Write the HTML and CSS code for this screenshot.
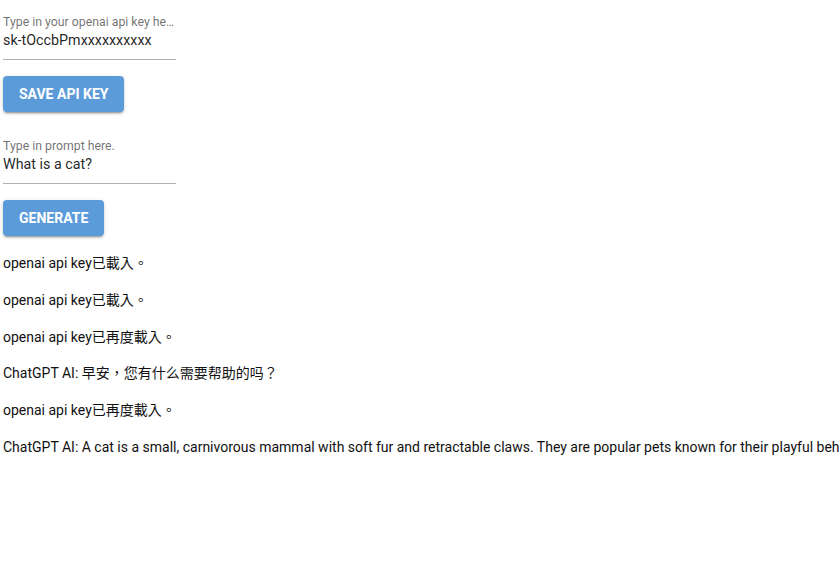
FILE: index.html
```html
<!DOCTYPE html>
<html lang="zh-Hant">
<head>
<meta charset="utf-8">
<title>ChatGPT</title>
<link rel="stylesheet" href="styles.css">
</head>
<body>
<div class="app">
  <div class="field">
    <label class="field-label">Type in your openai api key here</label>
    <div class="field-input">sk-tOccbPmxxxxxxxxxx</div>
  </div>
  <button class="btn">Save API Key</button>
  <div class="field field-next">
    <label class="field-label">Type in prompt here.</label>
    <div class="field-input">What is a cat?</div>
  </div>
  <button class="btn">Generate</button>
  <div class="log">
    <p class="msg">openai api key已載入。</p>
    <p class="msg">openai api key已載入。</p>
    <p class="msg">openai api key已再度載入。</p>
    <p class="msg">ChatGPT AI: 早安，您有什么需要帮助的吗？</p>
    <p class="msg">openai api key已再度載入。</p>
    <p class="msg">ChatGPT AI: A cat is a small, carnivorous mammal with soft fur and retractable claws. They are popular pets known for their playful behavior and independent nature.</p>
  </div>
</div>
</body>
</html>
```

FILE: styles.css
```css
html, body {
  margin: 0;
  padding: 0;
  background: #ffffff;
  overflow: hidden;
}

body {
  font-family: Roboto, "Noto Sans CJK TC", sans-serif;
  color: rgba(0, 0, 0, 0.87);
}

.app {
  display: flex;
  flex-direction: column;
  align-items: flex-start;
  padding: 12px 0 0 3px;
}

.field {
  width: 173px;
  display: flex;
  flex-direction: column;
  border-bottom: 1px solid rgba(0, 0, 0, 0.3);
}

.field-next {
  margin-top: 24px;
}

.field-label {
  font-size: 12.3px;
  line-height: 14px;
  padding-top: 3px;
  color: rgba(0, 0, 0, 0.58);
  white-space: nowrap;
  overflow: hidden;
  text-overflow: ellipsis;
}

.field-input {
  font-size: 14.3px;
  line-height: 19px;
  padding: 2px 0 9px;
  color: rgba(0, 0, 0, 0.87);
  white-space: nowrap;
}

.btn {
  margin-top: 16px;
  height: 36px;
  padding: 0 16px;
  border: none;
  border-radius: 4px;
  background: #5c9bd9;
  color: #ffffff;
  font-family: Roboto, sans-serif;
  font-size: 14px;
  font-weight: 700;
  letter-spacing: 0;
  text-transform: uppercase;
  box-shadow: 0 3px 1px -2px rgba(0,0,0,0.2), 0 2px 2px 0 rgba(0,0,0,0.14), 0 1px 5px 0 rgba(0,0,0,0.12);
  cursor: pointer;
}

.log {
  margin-top: 17px;
  display: flex;
  flex-direction: column;
  gap: 16px;
}

.msg {
  margin: 0;
  font-size: 14px;
  line-height: 20.8px;
  color: #111111;
  white-space: nowrap;
}
```
